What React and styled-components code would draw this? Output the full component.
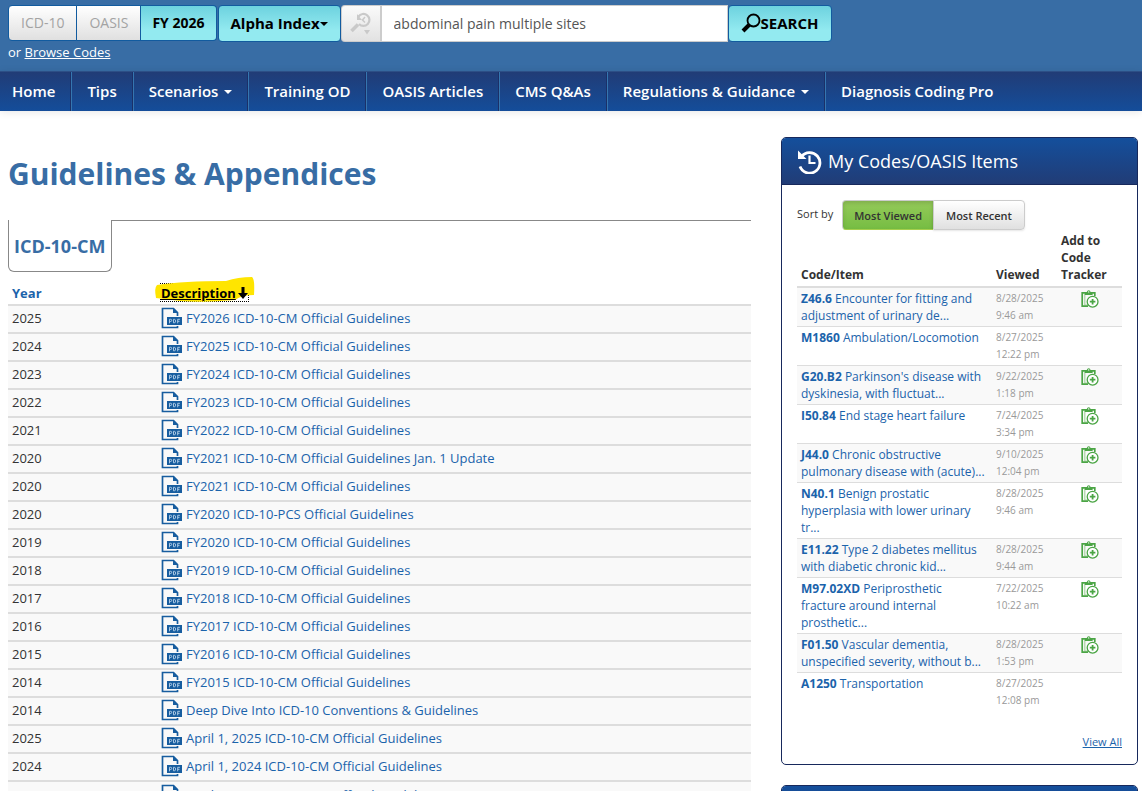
import React from "react";
import styled, { createGlobalStyle, css } from "styled-components";

const GlobalStyle = createGlobalStyle`
  *, *::before, *::after { box-sizing: border-box; }
  html { scrollbar-width: none; }
  body {
    margin: 0;
    background: #fff;
    color: #333;
    font: 13px/20px "Open Sans", "Liberation Sans", sans-serif;
  }
  button, input { font-family: inherit; }
  a { color: #1b63ab; text-decoration: none; }
`;

const Header = styled.header`
  background: #386da5;
  padding: 5px 8px 9px;
`;

const SearchBar = styled.form`
  display: flex;
  align-items: stretch;
  height: 37px;
`;

const Group = styled.div`
  display: flex;
  margin-right: 1px;
  padding-bottom: 1px;
`;

const aqua = css`
  background: linear-gradient(#6dd2df, #93eaf0 70%);
  color: #000;
  font-weight: 700;
`;

const BarButton = styled.button`
  display: flex;
  align-items: center;
  padding: 0 ${(p) => p.$pad || 12}px 1px;
  border: 1px solid #125b9f;
  border-radius: ${(p) => p.$radius || "4px"};
  background: linear-gradient(#fff, #e0e0e0);
  color: #a3a3a3;
  font-size: ${(p) => p.$size || 14}px;
  white-space: nowrap;
  ${(p) => p.$joined && "border-left-width: 0;"}
  ${(p) => p.$aqua && aqua}
`;

const HistoryButton = styled.button`
  width: 41px;
  flex: none;
  padding: 0;
  display: flex;
  align-items: center;
  justify-content: center;
  border: 1px solid #ccc;
  border-right-width: 2px;
  border-radius: 4px 0 0 4px;
  background: linear-gradient(#fafafa, #e2e2e2);
`;

const SearchInput = styled.input`
  flex: 0 1 346px;
  min-width: 0;
  border: 1px solid #ccc;
  border-left: 0;
  padding: 0 12px;
  background: #fff;
  color: #555;
  font-size: 14px;
`;

const Browse = styled.p`
  margin: 0;
  line-height: 20px;
  color: #fff;
  a { color: #fff; text-decoration: underline; }
`;

const Caret = styled.span`
  display: inline-block;
  border: 4px solid transparent;
  border-top-color: currentColor;
  border-bottom: 0;
  margin-top: 2px;
  margin-left: ${(p) => p.$gap || 0}px;
`;

const Nav = styled.nav`
  display: flex;
  height: 40px;
  background: linear-gradient(#213c76, #144d9a);
  border-top: 1px solid #2d4f86;
  box-shadow: 0 1px 8px rgba(0, 0, 0, 0.1);
`;

const NavLink = styled.a`
  display: flex;
  align-items: center;
  padding: 0 15px 1px;
  color: #fff;
  font-size: 15px;
  font-weight: 600;
  white-space: nowrap;
  border-left: 1px solid #3576b0;
  border-right: 1px solid #1b3068;
  &:first-child { border-left: 0; padding-left: 12px; }
  &:last-child { border-right: 0; }
`;

const Columns = styled.div`
  display: grid;
  grid-template-columns: minmax(0, 743fr) minmax(0, 357fr);
  gap: 30px;
  padding: 26px 4px 0 8px;
`;

const Title = styled.h1`
  margin: 17px 0 26px;
  color: #386da5;
  font-size: 30px;
  line-height: 40px;
  font-weight: 700;
`;

const Tabs = styled.div`
  display: flex;
  height: 52px;
  margin-bottom: 10px;
  &::after {
    content: "";
    flex: 1;
    border-top: 1px solid #888;
  }
`;

const Tab = styled.button`
  padding: 0 6px 0 5px;
  border: 1px solid #888;
  border-top: 0;
  border-radius: 0 0 6px 6px;
  background: #fff;
  color: #386da5;
  font-size: 18px;
  font-weight: 700;
`;

const GuideTable = styled.table`
  width: 100%;
  table-layout: fixed;
  border-collapse: collapse;
  th {
    height: 23px;
    padding: 0 4px 1px;
    text-align: left;
    line-height: 20px;
  }
  th:first-child { width: 149px; }
  td {
    height: 28px;
    padding: 0 4px 2px;
    border-top: 2px solid #ddd;
    background: #f9f9f9;
  }
`;

const DocLink = styled.a`
  display: flex;
  align-items: center;
  gap: 4px;
`;

const SortLink = styled.a`
  position: relative;
  display: inline-flex;
  align-items: center;
  height: 17px;
  color: #000;
  outline: 1px dotted #000;
  span { position: relative; text-decoration: underline; }
`;

const Marker = styled.svg`
  position: absolute;
  left: -7px;
  top: -8px;
`;

const SortArrow = styled.svg`
  position: relative;
  margin-left: 2px;
`;

const Sidebar = styled.aside`
  display: flex;
  flex-direction: column;
  gap: 20px;
`;

const Panel = styled.section`
  border: 1px solid #17295c;
  border-radius: 5px;
  overflow: hidden;
  background: #fff;
`;

const PanelHead = styled.div`
  display: flex;
  align-items: center;
  gap: 6px;
  height: 47px;
  padding: 0 15px;
  background: linear-gradient(#144f9c, #213c76);
  border-bottom: 1px solid #17295c;
  color: #fff;
  h2 { margin: 0; font-size: 18px; font-weight: 400; line-height: 24px; }
`;

const PanelBody = styled.div`
  padding: 15px 15px 12px;
`;

const SortRow = styled.div`
  display: flex;
  align-items: flex-start;
  margin-bottom: 2px;
  > span { margin-right: 9px; line-height: 28px; font-size: 11px; }
`;

const SortButton = styled.button`
  height: 30px;
  padding: 0 12px;
  border: 1px solid #ccc;
  border-radius: 0 4px 4px 0;
  background: linear-gradient(#fff, #e0e0e0);
  box-shadow: 0 1px 2px rgba(0, 0, 0, 0.1);
  color: #333;
  font-size: 11px;
  font-weight: 600;
  ${(p) =>
    p.$active &&
    css`
      padding: 0 11px;
      border-radius: 4px 0 0 4px;
      border-right: 0;
      border-bottom-color: #a5cf4c;
      background: linear-gradient(#95ca59, #76bd43);
      box-shadow: inset 0 2px 4px rgba(0, 0, 0, 0.15);
    `}
`;

const CodeTable = styled.table`
  width: 100%;
  table-layout: fixed;
  border-collapse: collapse;
  font-size: 12px;
  line-height: 17px;
  th {
    padding: 0 4px 3px;
    text-align: left;
    vertical-align: bottom;
  }
  th:first-child { width: 60%; }
  td {
    padding: 2px 4px;
    vertical-align: top;
    border-top: 1px solid #ddd;
  }
  tbody tr:first-child td { border-top-width: 2px; }
  tbody tr:nth-child(odd) td { background: #f9f9f9; }
  td:nth-child(2) { color: #999; font-size: 10px; }
  td:last-child { text-align: center; }
`;

const AddButton = styled.button`
  display: block;
  margin: 0 auto;
  padding: 0;
  border: 0;
  background: none;
  svg { display: block; }
`;

const ViewAll = styled.div`
  margin-top: 21px;
  text-align: right;
  font-size: 11px;
  a { text-decoration: underline; }
`;

const PdfIcon = () => (
  <svg width="21" height="22" viewBox="0 0 21 22" aria-hidden="true">
    <path d="M16.500 9V5.500L12.500 1.500H1.500v19h15V19" fill="none" stroke="#175d9f" strokeWidth="1.700" />
    <path d="M12 1l5 5h-5z" fill="#175d9f" />
    <rect x="6" y="10" width="15" height="8" fill="#175d9f" />
    <g fill="none" stroke="#b9d3ea" strokeWidth="0.900">
      <path d="M8.500 16.300v-4h1.200q1 0 1 1.100t-1 1.100H8.500" />
      <path d="M12.500 12.300v3.500h.8q1.300 0 1.300-1.700t-1.300-1.800z" />
      <path d="M16.700 16.300v-4h2.200M16.700 14.300h1.800" />
    </g>
  </svg>
);

const ClipboardIcon = () => (
  <svg width="18" height="18" viewBox="0 0 18 18" aria-hidden="true">
    <path d="M3.800 4v11H7" fill="none" stroke="#a9d3a2" strokeWidth="1.200" />
    <path d="M7 16.200H1.200V2.800H4M11 2.800h2.800V6" fill="none" stroke="#4ba545" strokeWidth="1.700" />
    <path d="M3.800 5V2h2Q6.200.2 7.700.2T9.600 2h2v3z" fill="#4ba545" />
    <circle cx="7.700" cy="1.900" r="0.700" fill="#fff" />
    <circle cx="11.600" cy="11.700" r="5.400" fill="#fff" stroke="#4ba545" strokeWidth="1.300" />
    <path d="M11.600 8.900v5.600M8.800 11.700h5.600" stroke="#4ba545" strokeWidth="1.800" />
  </svg>
);

const HistoryIcon = () => (
  <svg width="25" height="25" viewBox="0 0 25 25" aria-hidden="true">
    <path d="M4.500 7.500A10.300 10.300 0 1 1 3 17.500" fill="none" stroke="#fff" strokeWidth="2.800" />
    <path d="M1 1.500v8.500h8.500z" fill="#fff" />
    <path d="M12.500 6.500v7.500h6" fill="none" stroke="#fff" strokeWidth="2.200" />
  </svg>
);

const RecentSearchIcon = () => (
  <svg width="22" height="24" viewBox="0 0 22 24" aria-hidden="true">
    <path d="M8.500 4.500A6 6 0 1 1 9 12" fill="none" stroke="#c9c9c9" strokeWidth="2.200" />
    <path d="M7 2v6h5z" fill="#c9c9c9" />
    <path d="M15 5l-2.500 3L15 10.500" fill="none" stroke="#c9c9c9" strokeWidth="1.500" />
    <path d="M8 12.500L1.500 19" stroke="#c9c9c9" strokeWidth="3.500" />
    <path d="M14 18h6l-3 4.500z" fill="#c9c9c9" />
  </svg>
);

const SearchIcon = () => (
  <svg width="20" height="20" viewBox="0 0 20 20" aria-hidden="true">
    <circle cx="12.500" cy="7.500" r="6" fill="none" stroke="#000" strokeWidth="1.800" />
    <path d="M8 12l-6 6" stroke="#000" strokeWidth="4" />
  </svg>
);

const navItems = [
  ["Home"],
  ["Tips"],
  ["Scenarios", true],
  ["Training OD"],
  ["OASIS Articles"],
  ["CMS Q&As"],
  ["Regulations & Guidance", true],
  ["Diagnosis Coding Pro"],
];

const guidelines = [
  ["2025", "FY2026 ICD-10-CM Official Guidelines"],
  ["2024", "FY2025 ICD-10-CM Official Guidelines"],
  ["2023", "FY2024 ICD-10-CM Official Guidelines"],
  ["2022", "FY2023 ICD-10-CM Official Guidelines"],
  ["2021", "FY2022 ICD-10-CM Official Guidelines"],
  ["2020", "FY2021 ICD-10-CM Official Guidelines Jan. 1 Update"],
  ["2020", "FY2021 ICD-10-CM Official Guidelines"],
  ["2020", "FY2020 ICD-10-PCS Official Guidelines"],
  ["2019", "FY2020 ICD-10-CM Official Guidelines"],
  ["2018", "FY2019 ICD-10-CM Official Guidelines"],
  ["2017", "FY2018 ICD-10-CM Official Guidelines"],
  ["2016", "FY2017 ICD-10-CM Official Guidelines"],
  ["2015", "FY2016 ICD-10-CM Official Guidelines"],
  ["2014", "FY2015 ICD-10-CM Official Guidelines"],
  ["2014", "Deep Dive Into ICD-10 Conventions & Guidelines"],
  ["2025", "April 1, 2025 ICD-10-CM Official Guidelines"],
  ["2024", "April 1, 2024 ICD-10-CM Official Guidelines"],
  ["2023", "April 1, 2023 ICD-10-CM Official Guidelines"],
];

const codes = [
  ["Z46.6", "Encounter for fitting and adjustment of urinary de...", "8/28/2025", "9:46 am", true],
  ["M1860", "Ambulation/Locomotion", "8/27/2025", "12:22 pm", false],
  ["G20.B2", "Parkinson's disease with dyskinesia, with fluctuat...", "9/22/2025", "1:18 pm", true],
  ["I50.84", "End stage heart failure", "7/24/2025", "3:34 pm", true],
  ["J44.0", "Chronic obstructive pulmonary disease with (acute)...", "9/10/2025", "12:04 pm", true],
  ["N40.1", "Benign prostatic hyperplasia with lower urinary tr...", "8/28/2025", "9:46 am", true],
  ["E11.22", "Type 2 diabetes mellitus with diabetic chronic kid...", "8/28/2025", "9:44 am", true],
  ["M97.02XD", "Periprosthetic fracture around internal prosthetic...", "7/22/2025", "10:22 am", true],
  ["F01.50", "Vascular dementia, unspecified severity, without b...", "8/28/2025", "1:53 pm", true],
  ["A1250", "Transportation", "8/27/2025", "12:08 pm", false],
];

export default function App() {
  return (
    <>
      <GlobalStyle />
      <Header>
        <SearchBar onSubmit={(e) => e.preventDefault()}>
          <Group>
            <BarButton type="button" $radius="4px 0 0 4px">ICD-10</BarButton>
            <BarButton type="button" $radius="0" $joined>OASIS</BarButton>
            <BarButton type="button" $radius="0 4px 4px 0" $joined $aqua $pad={11}>FY 2026</BarButton>
          </Group>
          <BarButton type="button" $aqua $size={15}>
            Alpha Index<Caret />
          </BarButton>
          <HistoryButton type="button" aria-label="Recent searches">
            <RecentSearchIcon />
          </HistoryButton>
          <SearchInput type="text" aria-label="Search codes" defaultValue="abdominal pain multiple sites" />
          <BarButton type="submit" $aqua $size={15}>
            <SearchIcon />SEARCH
          </BarButton>
        </SearchBar>
        <Browse>
          or <a href="#browse">Browse Codes</a>
        </Browse>
      </Header>
      <Nav>
        {navItems.map(([label, menu]) => (
          <NavLink href="#nav" key={label}>
            {label}
            {menu && <Caret $gap={6} />}
          </NavLink>
        ))}
      </Nav>
      <Columns>
        <main>
          <Title>Guidelines &amp; Appendices</Title>
          <Tabs>
            <Tab type="button">ICD-10-CM</Tab>
          </Tabs>
          <GuideTable>
            <thead>
              <tr>
                <th><a href="#year">Year</a></th>
                <th>
                  <SortLink href="#description">
                    <Marker width="102" height="28" viewBox="0 0 102 28" aria-hidden="true">
                      <path d="M3 9Q30 5 72 5Q84 1 98 1Q101 3 100 19Q88 19 81 24Q50 27 26 25L2 22Q0 12 3 9z" fill="#ffe500" />
                    </Marker>
                    <span>Description</span>
                    <SortArrow width="10" height="14" viewBox="0 0 10 14" aria-hidden="true">
                      <path d="M3.500 1h3v6H10l-5 6-5-6h3.500z" fill="#000" />
                    </SortArrow>
                  </SortLink>
                </th>
              </tr>
            </thead>
            <tbody>
              {guidelines.map(([year, text]) => (
                <tr key={text}>
                  <td>{year}</td>
                  <td>
                    <DocLink href="#pdf"><PdfIcon />{text}</DocLink>
                  </td>
                </tr>
              ))}
            </tbody>
          </GuideTable>
        </main>
        <Sidebar>
          <Panel>
            <PanelHead>
              <HistoryIcon />
              <h2>My Codes/OASIS Items</h2>
            </PanelHead>
            <PanelBody>
              <SortRow>
                <span>Sort by</span>
                <SortButton type="button" $active>Most Viewed</SortButton>
                <SortButton type="button">Most Recent</SortButton>
              </SortRow>
              <CodeTable>
                <thead>
                  <tr>
                    <th>Code/Item</th>
                    <th>Viewed</th>
                    <th>Add to Code Tracker</th>
                  </tr>
                </thead>
                <tbody>
                  {codes.map(([code, text, date, time, add]) => (
                    <tr key={code}>
                      <td><a href="#code"><b>{code}</b> {text}</a></td>
                      <td>{date}<br />{time}</td>
                      <td>
                        {add && (
                          <AddButton type="button" aria-label={`Add ${code}`}>
                            <ClipboardIcon />
                          </AddButton>
                        )}
                      </td>
                    </tr>
                  ))}
                </tbody>
              </CodeTable>
              <ViewAll><a href="#all">View All</a></ViewAll>
            </PanelBody>
          </Panel>
          <Panel>
            <PanelHead />
          </Panel>
        </Sidebar>
      </Columns>
    </>
  );
}
